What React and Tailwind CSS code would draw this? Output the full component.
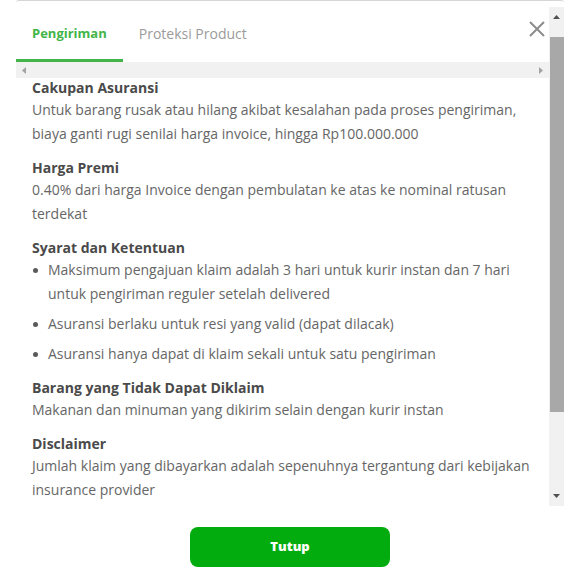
import React from "react";

const sections = [
  {
    title: "Cakupan Asuransi",
    body: "Untuk barang rusak atau hilang akibat kesalahan pada proses pengiriman, biaya ganti rugi senilai harga invoice, hingga Rp100.000.000",
  },
  {
    title: "Harga Premi",
    body: "0.40% dari harga Invoice dengan pembulatan ke atas ke nominal ratusan terdekat",
  },
  {
    title: "Syarat dan Ketentuan",
    list: [
      "Maksimum pengajuan klaim adalah 3 hari untuk kurir instan dan 7 hari untuk pengiriman reguler setelah delivered",
      "Asuransi berlaku untuk resi yang valid (dapat dilacak)",
      "Asuransi hanya dapat di klaim sekali untuk satu pengiriman",
    ],
  },
  {
    title: "Barang yang Tidak Dapat Diklaim",
    body: "Makanan dan minuman yang dikirim selain dengan kurir instan",
  },
  {
    title: "Disclaimer",
    body: "Jumlah klaim yang dibayarkan adalah sepenuhnya tergantung dari kebijakan insurance provider",
  },
];

function Arrow({ dir }) {
  const paths = {
    up: "M0 4 L3.5 0 L7 4 Z",
    down: "M0 0 L7 0 L3.5 4 Z",
    left: "M4 0 L4 7 L0 3.5 Z",
    right: "M0 0 L4 3.5 L0 7 Z",
  };
  const vertical = dir === "up" || dir === "down";
  return (
    <svg width={vertical ? 7 : 4} height={vertical ? 4 : 7} viewBox={vertical ? "0 0 7 4" : "0 0 4 7"}>
      <path d={paths[dir]} fill={vertical ? "#505050" : "#a3a3a3"} />
    </svg>
  );
}

export default function App() {
  return (
    <div
      className="w-[581px] h-[581px] bg-white overflow-hidden"
      style={{ fontFamily: '"Open Sans", "Noto Sans", sans-serif' }}
    >
      <div className="ml-[16px] w-[548px] h-[578px] flex flex-col border-t border-[#d6d6d6] rounded-t-[3px]">
        {/* scroll area */}
        <div className="mt-[6px] h-[499px] shrink-0 flex">
          <div className="flex-1 flex flex-col overflow-hidden">
            {/* tabs */}
            <div className="h-[55px] shrink-0 flex items-stretch">
              <div className="px-4 flex items-center border-b-[3px] border-[#42b549] pt-[1px]">
                <span className="text-[13px] font-bold text-[#42b549]">Pengiriman</span>
              </div>
              <div className="px-4 flex items-center pb-[2px]">
                <span className="text-[14px] text-[#9b9b9b]">Proteksi Product</span>
              </div>
              <div className="flex-1" />
              <button className="mr-[4px] self-start mt-[14px] w-[16px] h-[16px]">
                <svg width="16" height="16" viewBox="0 0 16 16">
                  <path d="M1 1 L15 15 M15 1 L1 15" stroke="#8c8c8c" strokeWidth="2" />
                </svg>
              </button>
            </div>
            {/* horizontal scrollbar */}
            <div className="h-[16px] shrink-0 bg-[#f1f1f1] flex items-center justify-between px-[6px]">
              <Arrow dir="left" />
              <Arrow dir="right" />
            </div>
            {/* content */}
            <div className="shrink-0 px-4 text-[14px]">
              {sections.map((s, i) => (
                <div key={i} className="mb-[12px]">
                  <h3 className="font-bold text-[#4a4a4a] leading-[20px]">{s.title}</h3>
                  {s.body && <p className="text-[#666666] leading-[24px]">{s.body}</p>}
                  {s.list && (
                    <ul>
                      {s.list.map((item, j) => (
                        <li key={j} className="flex mb-[6px] last:mb-0">
                          <span className="w-[16px] shrink-0 flex pt-[10px]">
                            <span className="ml-[1px] w-[5px] h-[5px] rounded-full bg-[#5a5a5a]" />
                          </span>
                          <span className="text-[#666666] leading-[24px]">{item}</span>
                        </li>
                      ))}
                    </ul>
                  )}
                </div>
              ))}
            </div>
          </div>
          {/* vertical scrollbar */}
          <div className="w-[15px] bg-[#f1f1f1] flex flex-col items-center">
            <div className="h-[16px] flex items-center justify-center pt-[3px]">
              <Arrow dir="up" />
            </div>
            <div className="h-[14px]" />
            <div className="w-[14px] h-[375px] bg-[#a8a8a8]" />
            <div className="flex-1" />
            <div className="h-[16px] flex items-center justify-center pb-[4px]">
              <Arrow dir="down" />
            </div>
          </div>
        </div>
        {/* footer */}
        <div className="flex-1 flex items-start justify-center pt-[21px]">
          <button className="w-[200px] h-[40px] rounded-[8px] bg-[#03ac0e] text-white text-[13px] font-extrabold">
            Tutup
          </button>
        </div>
      </div>
    </div>
  );
}
